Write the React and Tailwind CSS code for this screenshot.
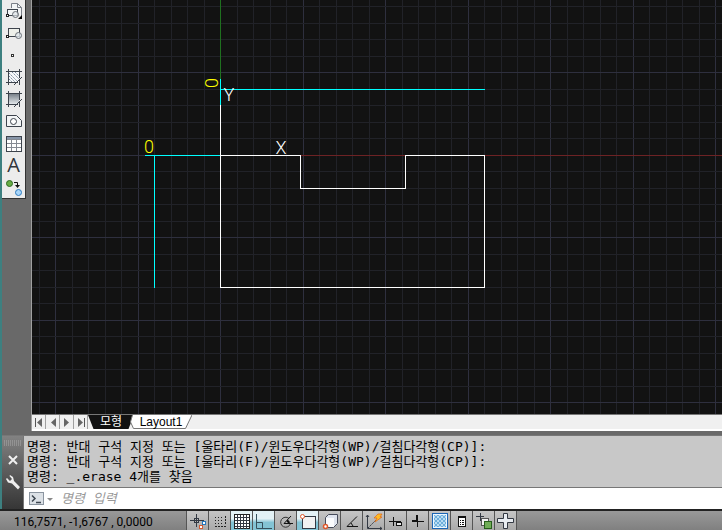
import React, { useState } from 'react';

const COMMAND_LOG = [
  '명령: 반대 구석 지정 또는 [울타리(F)/윈도우다각형(WP)/걸침다각형(CP)]:',
  '명령: 반대 구석 지정 또는 [울타리(F)/윈도우다각형(WP)/걸침다각형(CP)]:',
  '명령: _.erase 4개를 찾음',
];

const Icon = ({ children, size = 18 }) => (
  <svg width={size} height={size} viewBox={`0 0 ${size} ${size}`} fill="none" aria-hidden="true">
    {children}
  </svg>
);

const HatchFrame = () => (
  <path d="M1 3.5h16M1 14.5h12M3.5 1v16M14.5 1v9M9 17l8-8M14.5 11v6" stroke="#3d434c" />
);

const DRAW_TOOLS = [
  {
    label: 'Insert block',
    icon: (
      <Icon>
        <path d="M6.5 6V1.5h6l4 4V14" fill="#f3f5f6" stroke="#7b8088" />
        <path d="M12.5 1.5v4h4" stroke="#7b8088" />
        <rect x="2.5" y="7.5" width="10" height="6" fill="#f3f5f6" stroke="#3d434c" />
        <circle cx="10.5" cy="12.5" r="3" fill="#dfe6ea" fillOpacity=".7" stroke="#6b7078" />
        <rect x="1.5" y="12.5" width="2" height="2" fill="#fff" stroke="#222" />
        <path d="M17 13v4h-4z" fill="#000" />
      </Icon>
    ),
  },
  {
    label: 'Make block',
    icon: (
      <Icon>
        <rect x="3.5" y="4.5" width="11" height="8" fill="#eef0ea" stroke="#3d434c" />
        <circle cx="13.5" cy="11.5" r="3" fill="#dfe6ea" fillOpacity=".8" stroke="#6b7078" />
        <rect x="1.5" y="11.5" width="2" height="2" fill="#fff" stroke="#222" />
      </Icon>
    ),
  },
  {
    label: 'Point',
    icon: (
      <Icon>
        <rect x="6.5" y="8.5" width="2" height="2" fill="#fff" stroke="#333" />
      </Icon>
    ),
  },
  {
    label: 'Hatch',
    icon: (
      <Icon>
        <rect x="4" y="4" width="10" height="10" fill="#f7f9fb" />
        <path d="M4 5l9 9M7 4l7 7M4 8l6 6M10 4l4 4M4 11l3 3" stroke="#7d8ba0" strokeDasharray="2 1" />
        <HatchFrame />
      </Icon>
    ),
  },
  {
    label: 'Gradient',
    icon: (
      <Icon>
        <defs>
          <linearGradient id="gradient-tool" x1="0" y1="0" x2="0" y2="1">
            <stop offset="0" stopColor="#79818a" />
            <stop offset="1" stopColor="#e3e7ea" />
          </linearGradient>
        </defs>
        <rect x="4" y="4" width="10" height="10" fill="url(#gradient-tool)" />
        <HatchFrame />
      </Icon>
    ),
  },
  {
    label: 'Region',
    icon: (
      <Icon>
        <path d="M1.5 3.5h10l5 5v6h-15z" fill="#f3f5f6" stroke="#3d434c" />
        <circle cx="8.5" cy="9.5" r="3" fill="#fff" stroke="#3d434c" />
      </Icon>
    ),
  },
  {
    label: 'Table',
    icon: (
      <Icon>
        <rect x="1.5" y="2.5" width="15" height="15" fill="#fff" stroke="#3d434c" />
        <rect x="2" y="3" width="14" height="2" fill="#8795a8" />
        <path d="M2 5.5h14M2 9.5h14M2 13.5h14M6.5 6v11M11.5 6v11" stroke="#858a92" />
      </Icon>
    ),
  },
  {
    label: 'Multiline text',
    icon: (
      <span className="text-[20px] font-medium leading-[22px] text-[#30343a] [font-family:'Open_Sans',sans-serif]">
        A
      </span>
    ),
  },
  {
    label: 'Add selected',
    icon: (
      <Icon>
        <circle cx="4.5" cy="5.5" r="3" fill="#67ad45" stroke="#2f6a21" />
        <circle cx="13.5" cy="14.5" r="3" fill="#a9d6fa" stroke="#2e7cc0" />
        <path d="M9 4.5h3.5V8" stroke="#111" />
        <path d="M10 7h5l-2.5 3z" fill="#111" />
      </Icon>
    ),
  },
];

const STATUS_TOGGLES = [
  {
    label: 'Infer constraints',
    icon: (
      <>
        <path d="M1 8.5h14M7.5 2v13" stroke="#333943" />
        <rect x="5.5" y="6.5" width="4" height="4" stroke="#333943" />
        <rect x="13.5" y="9.5" width="3" height="3" fill="#fff" stroke="#2476bd" />
        <rect x="10.5" y="13.5" width="3" height="3" fill="#fff" stroke="#d35a32" />
      </>
    ),
  },
  {
    label: 'Snap mode',
    icon: (
      <>
        <path d="M4 5.5h9M4 8.5h9M4 11.5h9" stroke="#222" strokeDasharray="1 2" />
        <path d="M4 14.5h8M14.5 4v8" stroke="#222" strokeDasharray="2 1" />
        <path d="M13 14.5h2" stroke="#222" />
      </>
    ),
  },
  {
    label: 'Grid display',
    active: true,
    icon: (
      <>
        <rect x="1.5" y="2.5" width="15" height="14" fill="#fff" stroke="#222" />
        <path d="M4.5 3v14M7.5 3v14M10.5 3v14M13.5 3v14M2 5.5h14M2 8.5h14M2 11.5h14M2 14.5h14" stroke="#333943" />
      </>
    ),
  },
  {
    label: 'Ortho mode',
    active: true,
    icon: <path d="M1.5 2v14.5H17M2 10.5h5.5V16" stroke="#36505c" />,
  },
  {
    label: 'Polar tracking',
    icon: (
      <>
        <path d="M12 6.5a5 5 0 1 0 1.5 5" stroke="#333" />
        <path d="M7 11.5h9M7 11.5L14 4" stroke="#111" />
        <path d="M10 8.5q2 1 2 3" stroke="#111" strokeWidth="2" />
      </>
    ),
  },
  {
    label: 'Object snap',
    active: true,
    icon: (
      <>
        <rect x="3.5" y="4.5" width="13" height="12" fill="#f1f1f1" stroke="#333943" />
        <circle cx="3.5" cy="4.5" r="2" fill="#fff" stroke="#e0582b" />
      </>
    ),
  },
  {
    label: '3D object snap',
    icon: (
      <>
        <path d="M4.5 5.5l3-3h9v9l-4 4h-8z" fill="#dfe4ee" stroke="#464b5a" />
        <path d="M5 6h8v9H5z" fill="#fafbfd" />
        <circle cx="4.5" cy="14.5" r="2" fill="#fff" stroke="#e0582b" strokeWidth="1.5" />
      </>
    ),
  },
  {
    label: 'Object snap tracking',
    icon: (
      <>
        <path d="M4 14.5h11M4 14.5l10-10" stroke="#111" />
        <path d="M8 11l2 3" stroke="#111" />
      </>
    ),
  },
  {
    label: 'Dynamic UCS',
    icon: (
      <>
        <path d="M2.5 3v13.5H17M1 5l1.5-2L4 5M15 15l2 1.5-2 1.5" stroke="#333943" />
        <path d="M3 16L11 8" stroke="#333943" strokeDasharray="2 1" />
        <path d="M13 2h4l-2 3h2l-7 5 2-4h-3z" fill="#ffbd24" stroke="#df6517" strokeWidth=".7" />
      </>
    ),
  },
  {
    label: 'Dynamic input',
    icon: (
      <>
        <path d="M2 9.5h12M6.5 5v9" stroke="#111" />
        <rect x="9.5" y="10.5" width="5" height="3" fill="#e8e8e8" stroke="#111" />
      </>
    ),
  },
  {
    label: 'Lineweight',
    icon: (
      <>
        <path d="M3 9h6M8 3v6" stroke="#111" strokeWidth="2" />
        <path d="M8 9.5h7M8.5 9v6" stroke="#111" />
      </>
    ),
  },
  {
    label: 'Transparency',
    icon: (
      <>
        <defs>
          <pattern id="checker" width="4" height="4" patternUnits="userSpaceOnUse">
            <path d="M0 0h2v2H0zM2 2h2v2H2z" fill="#6daedb" />
          </pattern>
        </defs>
        <rect x="1.5" y="1.5" width="15" height="15" fill="#b9dcf2" stroke="#1c66b5" />
        <rect x="3" y="3" width="12" height="12" fill="url(#checker)" />
        <rect x="2.5" y="2.5" width="13" height="13" stroke="#eef8ff" />
      </>
    ),
  },
  {
    label: 'Quick properties',
    icon: (
      <>
        <rect x="5.5" y="4.5" width="7" height="10" fill="#fff" stroke="#111" />
        <path d="M5 5.5h8" stroke="#111" />
        <path d="M7 8.5h1M9 8.5h2M7 10.5h1M9 10.5h2M7 12.5h1M9 12.5h2" stroke="#111" />
      </>
    ),
  },
  {
    label: 'Selection cycling',
    icon: (
      <>
        <path d="M1 4.5h8M5.5 1v8" stroke="#333943" />
        <rect x="6.5" y="6.5" width="7" height="7" fill="#f3f3f3" stroke="#555" />
        <rect x="9.5" y="9.5" width="7" height="7" fill="#70ad56" stroke="#275f1c" />
      </>
    ),
  },
  {
    label: 'Annotation monitor',
    icon: (
      <path d="M6.5 1.5h4v5h6v4h-6v6h-4v-6h-6v-4h6z" fill="#e9edf2" stroke="#333943" />
    ),
  },
];

// minor spacing is 16.5px, every fifth line is a major one
const GRID_COLUMNS = [0, 17, 33, 50, 66, 83, 99, 116, 132, 149];
const GRID_ROWS = [0, 16, 33, 49, 66, 82, 99, 115, 132, 148];

const gridColor = (i) => (i % 5 === 0 ? '#2e2f3e' : '#212228');

function DrawingCanvas() {
  return (
    <svg className="block h-full w-full bg-[#121212]" shapeRendering="crispEdges" fill="none" role="img" aria-label="모형 공간">
      <defs>
        {/* two major cells, drawn from the UCS origin */}
        <pattern id="cad-grid" x="188" y="155" width="165" height="165" patternUnits="userSpaceOnUse">
          {GRID_COLUMNS.map((x, i) => (
            <rect key={x} x={x} y="0" width="1" height="165" fill={gridColor(i)} />
          ))}
          {GRID_ROWS.map((y, i) => (
            <rect key={y} x="0" y={y} width="165" height="1" fill={gridColor(i)} />
          ))}
        </pattern>
      </defs>
      <rect width="100%" height="100%" fill="url(#cad-grid)" />

      <g transform="translate(-32 0)">
        {/* axes */}
        <rect x="220" y="155" width="4000" height="1" fill="#6d2224" />
        <rect x="220" y="0" width="1" height="80" fill="#1f701f" />

        {/* dimension lines */}
        <path d="M220.5 79v27M220 89.5h265M145 155.5h76M154.5 155v133" stroke="#0ff" />

        {/* part outline */}
        <path d="M220.5 105v182.5h264v-132h-79v33h-105v-33h-80" stroke="#fff" />

        <g shapeRendering="auto" className="text-[18px] font-light [font-family:Roboto,sans-serif]">
          <text x="229" y="101" textAnchor="middle" fill="#fff">Y</text>
          <text x="281" y="154" textAnchor="middle" fill="#fff">X</text>
          <text x="149" y="153" textAnchor="middle" fill="#ff0">0</text>
          <text transform="translate(218 83) rotate(-90)" x="0" y="0" textAnchor="middle" fill="#ff0">0</text>
        </g>
      </g>
    </svg>
  );
}

const NAV_BUTTONS = [
  { label: 'First', d: 'M3.5 2v9', arrow: 'M10 2v9L5 6.5z' },
  { label: 'Previous', d: '', arrow: 'M10 2v9L5 6.5z' },
  { label: 'Next', d: '', arrow: 'M4 2v9l5-4.5z' },
  { label: 'Last', d: 'M10.5 2v9', arrow: 'M4 2v9l5-4.5z' },
];

function LayoutTabs({ tab, onTabChange }) {
  return (
    <div className="flex h-[17px] shrink-0 border-t border-[#777] border-b-2 border-b-white bg-[#f0f0f0] text-xs leading-[15px] text-black [font-family:'Liberation_Sans','Noto_Sans_CJK_KR',sans-serif]">
      {NAV_BUTTONS.map((b) => (
        <button key={b.label} type="button" aria-label={b.label} className="w-[14px] shrink-0 border-r border-[#a0a0a0]">
          <svg width="13" height="13" viewBox="0 0 13 13" fill="none">
            <path d={b.d} stroke="#555" />
            <path d={b.arrow} fill="#666" />
          </svg>
        </button>
      ))}
      <button
        type="button"
        onClick={() => onTabChange('model')}
        aria-pressed={tab === 'model'}
        className="w-[46px] shrink-0 bg-[#121212] text-white [clip-path:polygon(0_0,100%_0,88%_100%,12%_100%)]"
      >
        모형
      </button>
      <button
        type="button"
        onClick={() => onTabChange('layout1')}
        aria-pressed={tab === 'layout1'}
        className="relative -ml-1 w-[62px] shrink-0"
      >
        <svg className="absolute inset-0 h-full w-full" viewBox="0 0 62 14" preserveAspectRatio="none" fill="none">
          <path d="M2.5 0L.5 7l3 6.5h52L62 0" fill="#fff" stroke="#777" />
        </svg>
        <span className="relative">Layout1</span>
      </button>
    </div>
  );
}

function CommandWindow() {
  const [command, setCommand] = useState('');

  return (
    <section className="flex shrink-0 border-t border-[#777] text-[13px] [font-family:'DejaVu_Sans_Mono','Noto_Sans_CJK_KR',monospace]">
      <div className="flex w-[22px] shrink-0 flex-col items-center gap-2 border-r border-[#777] bg-linear-to-b from-[#828282] to-[#363636] pt-1">
        <svg width="17" height="6" viewBox="0 0 17 6" fill="none" aria-hidden="true">
          <path d="M0 1h17M0 3h17M0 5h17" stroke="#aaa" strokeDasharray="1 1" />
        </svg>
        <button type="button" aria-label="Close">
          <svg width="12" height="12" viewBox="0 0 12 12" fill="none">
            <path d="M2 2l8 8M10 2l-8 8" stroke="#f0f0f0" strokeWidth="2" />
          </svg>
        </button>
        <button type="button" aria-label="Customize">
          <svg width="16" height="16" viewBox="0 0 16 16">
            <path
              d="M5 1l3 2 1 4 6 6-2 2.500-6-6-4-1-2-3.500 1-1 3 3 2-2-2.500-3z"
              fill="#eee"
            />
          </svg>
        </button>
      </div>
      <div className="min-w-0 flex-1 bg-white">
        <div className="border-b border-[#777] bg-[#c8c8c8] py-[3px] pl-[3px] text-black">
          {COMMAND_LOG.map((line, i) => (
            <p key={i} className="h-[15px] whitespace-nowrap leading-[15px]">{line}</p>
          ))}
        </div>
        <label className="flex h-[21px] items-center pl-[5px]">
          <svg width="26" height="14" viewBox="0 0 26 14" fill="none" aria-hidden="true">
            <rect x=".5" y=".5" width="14" height="12" fill="#dce1e6" stroke="#8b95a0" />
            <path d="M3 3.5l3 3-3 3M7 10.5h5" stroke="#3d4650" strokeWidth="1.5" />
            <path d="M18 6h6l-3 3z" fill="#888" />
          </svg>
          <input
            type="text"
            aria-label="명령 입력"
            placeholder="명령 입력"
            value={command}
            onChange={(e) => setCommand(e.target.value)}
            className="ml-1.5 min-w-0 flex-1 bg-transparent text-black outline-none placeholder:italic placeholder:text-[#999]"
          />
        </label>
      </div>
    </section>
  );
}

function StatusBar() {
  const [toggles, setToggles] = useState(STATUS_TOGGLES.map((t) => Boolean(t.active)));

  const toggle = (index) => {
    setToggles(toggles.map((on, i) => (i === index ? !on : on)));
  };

  return (
    <footer className="flex h-[21px] shrink-0 overflow-hidden border-t-2 border-[#222] bg-linear-to-b from-[#999] to-[#808080]">
      <div className="w-[186px] shrink-0 whitespace-pre pl-[14px] pt-[3px] text-xs leading-4 text-black [font-family:Roboto,sans-serif]">
        116,7571, -1,6767 , 0,0000
      </div>
      <div className="flex border-l border-[#555]">
        {STATUS_TOGGLES.map((item, i) => (
          <button
            key={item.label}
            type="button"
            aria-label={item.label}
            aria-pressed={toggles[i]}
            onClick={() => toggle(i)}
            className={`flex w-[22px] shrink-0 items-center justify-center border-r border-[#555] ${
              toggles[i]
                ? 'bg-linear-to-b from-[#e3f1f5] from-40% to-[#83c3d4] to-60%'
                : 'bg-linear-to-b from-[#c6c6c6] to-[#a9a9a9]'
            }`}
          >
            <Icon>{item.icon}</Icon>
          </button>
        ))}
      </div>
    </footer>
  );
}

export default function App() {
  const [tab, setTab] = useState('model');

  return (
    <div className="flex h-screen flex-col overflow-hidden bg-[#696969]">
      <div className="flex min-h-0 flex-1 flex-col border-l-2 border-[#3d8080]">
        <div className="flex min-h-0 flex-1 pb-1">
          <aside className="mr-[5px] shrink-0 self-start border-r border-b border-[#333] bg-[#ececec]">
            {DRAW_TOOLS.map((tool) => (
              <button
                key={tool.label}
                type="button"
                aria-label={tool.label}
                className="flex h-[22px] w-[23px] items-center justify-center hover:bg-white"
              >
                {tool.icon}
              </button>
            ))}
          </aside>
          <main className="flex min-w-0 flex-1 flex-col border-l border-[#a0a0a0]">
            <div className="min-h-0 flex-1">
              <DrawingCanvas />
            </div>
            <LayoutTabs tab={tab} onTabChange={setTab} />
          </main>
        </div>
        <CommandWindow />
      </div>
      <StatusBar />
    </div>
  );
}
